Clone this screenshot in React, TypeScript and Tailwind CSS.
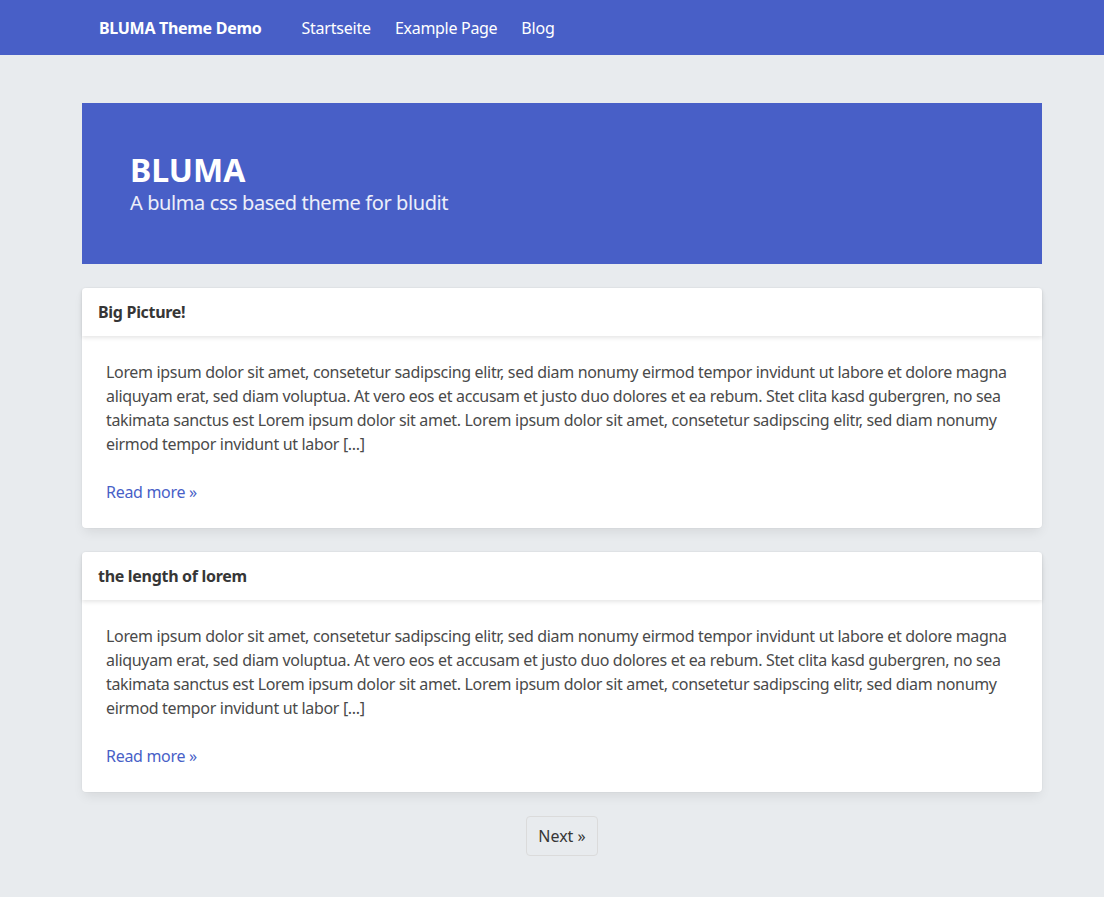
import React from "react";

const lines = [
  "Lorem ipsum dolor sit amet, consetetur sadipscing elitr, sed diam nonumy eirmod tempor invidunt ut labore et dolore magna",
  "aliquyam erat, sed diam voluptua. At vero eos et accusam et justo duo dolores et ea rebum. Stet clita kasd gubergren, no sea",
  "takimata sanctus est Lorem ipsum dolor sit amet. Lorem ipsum dolor sit amet, consetetur sadipscing elitr, sed diam nonumy",
  "eirmod tempor invidunt ut labor [...]",
];

function Card({ title }: { title: string }) {
  return (
    <div className="bg-white rounded-[4px] shadow-[0_6px_12px_-2px_rgba(10,10,10,0.08),0_0_0_1px_rgba(10,10,10,0.02)]">
      <div className="h-[48px] flex items-center px-4 shadow-[0_2px_4px_rgba(10,10,10,0.1)]">
        <p className="font-bold text-[#363636] text-[16px] tracking-[-0.3px]">{title}</p>
      </div>
      <div className="p-6 text-[16px] leading-6 text-[#4a4a4a]">
        <p className="whitespace-nowrap tracking-[-0.33px]">
          {lines.map((l, i) => (
            <React.Fragment key={i}>
              {l}
              {i < lines.length - 1 && <br />}
            </React.Fragment>
          ))}
        </p>
        <p className="mt-6">
          <a href="#" className="text-[#485fc7] tracking-[-0.3px]">Read more »</a>
        </p>
      </div>
    </div>
  );
}

export default function App() {
  return (
    <div className="min-h-[897px] bg-[#e8ebee] font-['Noto_Sans',sans-serif]">
      <nav className="h-[55px] bg-[#485fc7] text-white">
        <div className="w-[960px] ml-[82px] flex items-center h-full text-[16px]">
          <a className="font-bold pl-[17px] pr-[40px] tracking-[-0.3px]">BLUMA Theme Demo</a>
          <a className="pr-6 tracking-[-0.2px]">Startseite</a>
          <a className="pr-6 tracking-[-0.3px]">Example Page</a>
          <a className="tracking-[-0.2px]">Blog</a>
        </div>
      </nav>
      <div className="w-[960px] ml-[82px] pt-12 pb-10">
        <section className="bg-[#485fc7] h-[161px] px-12 flex flex-col justify-center text-white">
          <h1 className="text-[32px] font-bold leading-[1.125]">BLUMA</h1>
          <h2 className="text-[20px] leading-[1.25] mt-[2px] text-white/90 tracking-[-0.4px]">A bulma css based theme for bludit</h2>
        </section>
        <div className="mt-6 flex flex-col gap-6">
          <Card title="Big Picture!" />
          <Card title="the length of lorem" />
        </div>
        <div className="flex justify-center mt-6">
          <a className="h-10 w-[72px] justify-center flex items-center border border-[#dbdbdb] rounded-[4px] text-[#363636] text-[16px]">Next »</a>
        </div>
      </div>
    </div>
  );
}
